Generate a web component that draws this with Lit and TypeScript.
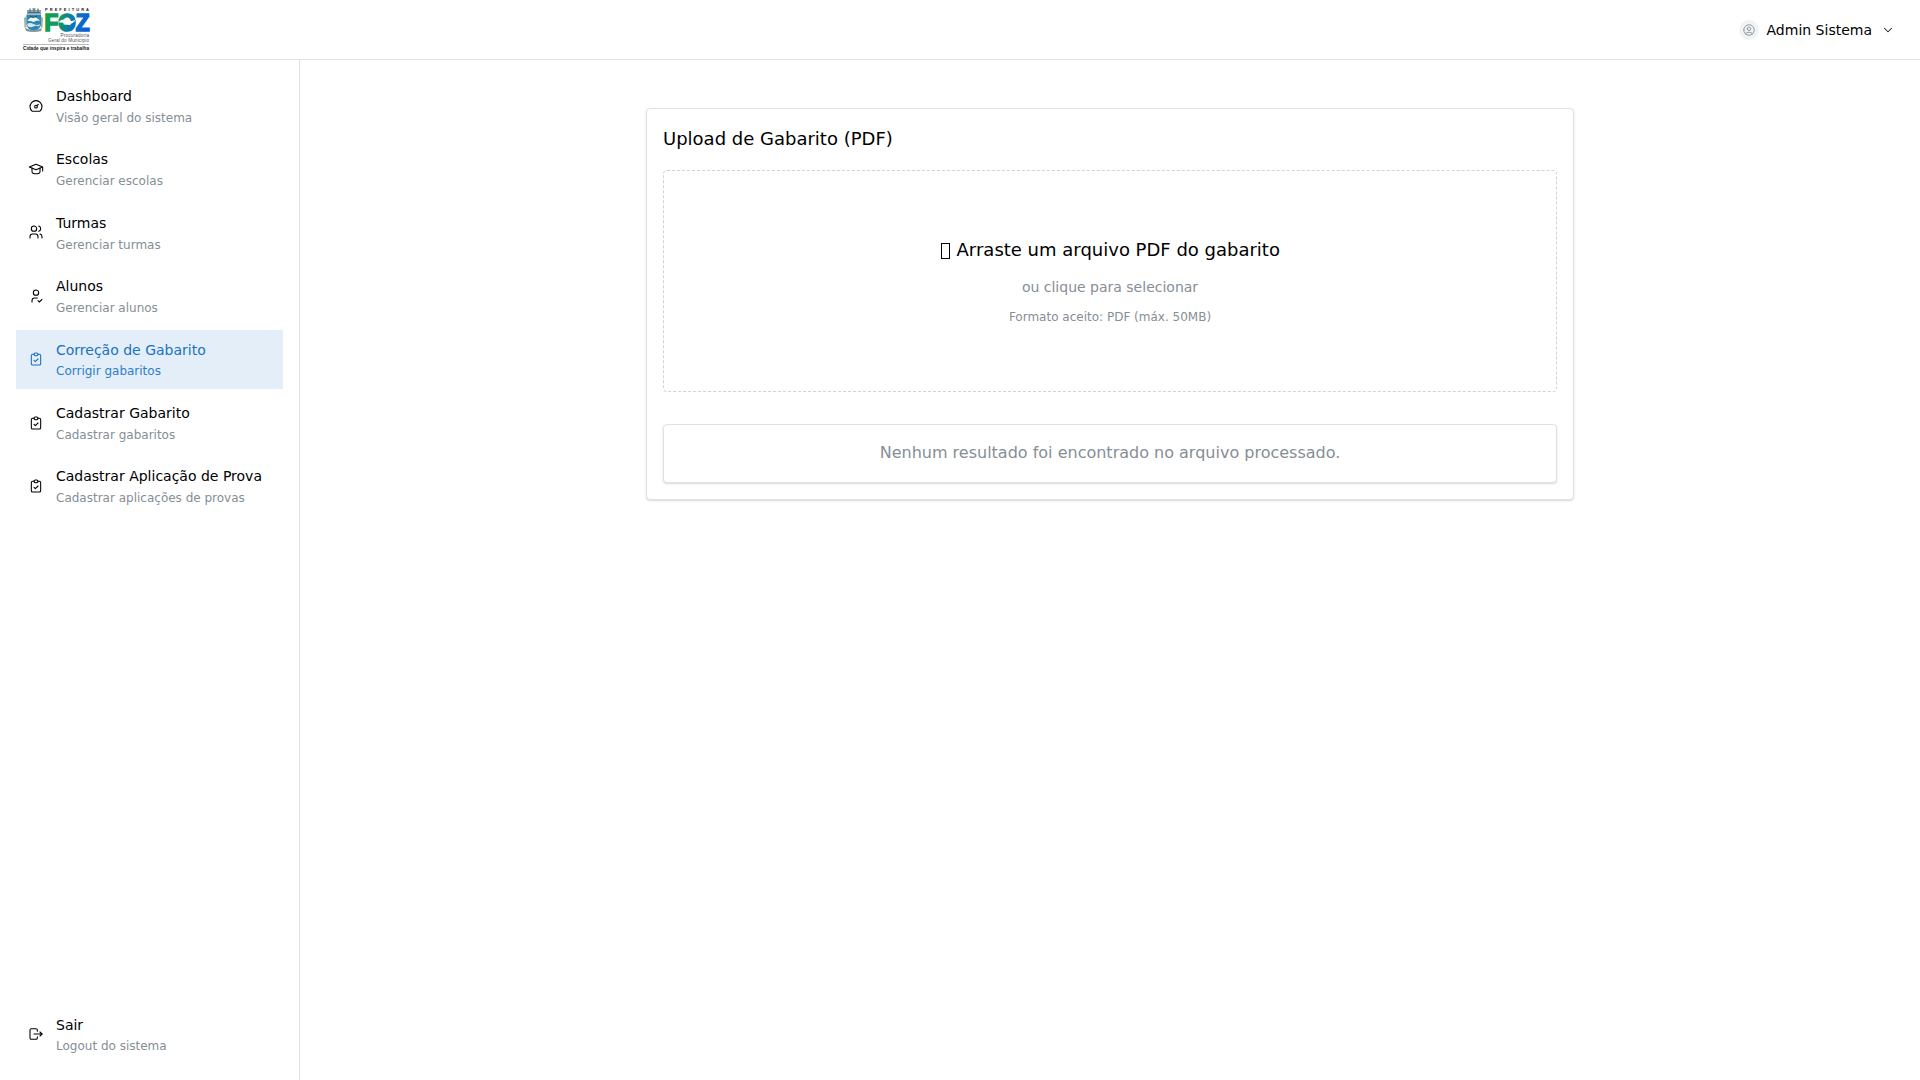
import { LitElement, html, css, svg } from "lit";
import { customElement, property } from "lit/decorators.js";

const ICONS: Record<string, string[]> = {
  dashboard: ["M10 13a2 2 0 1 0 4 0a2 2 0 1 0 -4 0", "M13.45 11.55l2.05 -2.05", "M6.4 20a9 9 0 1 1 11.2 0z"],
  school: ["M22 9l-10 -4l-10 4l10 4l10 -4v6", "M6 10.6v5.4a6 3 0 0 0 12 0v-5.4"],
  users: ["M5 7a4 4 0 1 0 8 0a4 4 0 1 0 -8 0", "M3 21v-2a4 4 0 0 1 4 -4h4a4 4 0 0 1 4 4v2", "M16 3.13a4 4 0 0 1 0 7.75", "M21 21v-2a4 4 0 0 0 -3 -3.85"],
  userCheck: ["M8 7a4 4 0 1 0 8 0a4 4 0 0 0 -8 0", "M6 21v-2a4 4 0 0 1 4 -4h4", "M15 19l2 2l4 -4"],
  clipboard: ["M9 5h-2a2 2 0 0 0 -2 2v12a2 2 0 0 0 2 2h10a2 2 0 0 0 2 -2v-12a2 2 0 0 0 -2 -2h-2", "M9 5a2 2 0 0 1 2 -2h2a2 2 0 0 1 2 2a2 2 0 0 1 -2 2h-2a2 2 0 0 1 -2 -2z", "M9 14l2 2l4 -4"],
  logout: ["M14 8v-2a2 2 0 0 0 -2 -2h-7a2 2 0 0 0 -2 2v12a2 2 0 0 0 2 2h7a2 2 0 0 0 2 -2v-2", "M9 12h12l-3 -3", "M18 15l3 -3"],
  chevron: ["M6 9l6 6l6 -6"],
  userCircle: ["M3 12a9 9 0 1 0 18 0a9 9 0 1 0 -18 0", "M9 10a3 3 0 1 0 6 0a3 3 0 1 0 -6 0", "M6.168 18.849a4 4 0 0 1 3.832 -2.849h4a4 4 0 0 1 3.834 2.855"],
};

const icon = (name: string, size: number, stroke = 1.5) => html`<svg
  width=${size} height=${size} viewBox="0 0 24 24" fill="none" stroke="currentColor"
  stroke-width=${stroke} stroke-linecap="round" stroke-linejoin="round"
>${ICONS[name].map((d) => svg`<path d=${d}></path>`)}</svg>`;

@customElement("nav-link")
class NavLink extends LitElement {
  @property() label = "";
  @property() description = "";
  @property() icon = "";
  @property({ type: Boolean, reflect: true }) active = false;

  static styles = css`
    :host { display: flex; align-items: center; padding: 8px 12px; color: #000; cursor: pointer; line-height: 1.55; }
    :host([active]) { background: #e3eef9; color: #1971c2; }
    svg { display: block; }
    .icon { margin-right: 12px; }
    .body { flex: 1; white-space: nowrap; font-size: 16px; }
    .label { font-size: 14px; }
    .description { display: block; font-size: 12px; color: #868e96; }
    :host([active]) .description { color: #1971c2; opacity: 0.9; }
  `;

  render() {
    return html`<span class="icon">${icon(this.icon, 16, 1.6)}</span>
      <div class="body"><span class="label">${this.label}</span><span class="description">${this.description}</span></div>`;
  }
}

@customElement("city-logo")
class CityLogo extends LitElement {
  static styles = css`
    :host { display: block; }
    svg { display: block; overflow: visible; }
    text { font-family: "Liberation Sans", Arial, sans-serif; }
  `;

  render() {
    return html`<svg width="70" height="48" viewBox="0 0 70 48">
      <defs>
        <linearGradient id="foz" gradientUnits="userSpaceOnUse" x1="23" x2="67" y1="10" y2="22">
          <stop offset="0" stop-color="#12a050"></stop>
          <stop offset="0.35" stop-color="#0c9a62"></stop>
          <stop offset="0.6" stop-color="#0a78b0"></stop>
          <stop offset="1" stop-color="#0b5ce0"></stop>
        </linearGradient>
      </defs>
      <path d="M5 8V4h2V2.500h2V4h1.500V2h3v2h1.500V2.500h2V4H19v4z" fill="#8fa5aa"></path>
      <path d="M6 6.500h12M8 4v3M12 3v4M16 4v3" stroke="#4d666c" stroke-width="0.900"></path>
      <path d="M2 12l2.500-2v11l-2 1zM21 12l-2.500-2v11l2 1z" fill="#9db5a5"></path>
      <path d="M4.500 8.500h14.500v10q-1 5-7.250 6.500Q5.500 23.500 4.500 18.500z" fill="#2d86b5"></path>
      <path d="M5.500 15q2-4 5-3.500 4-1 7.500 3.500l-3-.5-3.500 1.500-3-1z" fill="#eef6f8"></path>
      <path d="M5 18q3-2 6.500 0t6.500 0l-1 2.500q-3-1.500-5.500 0t-5.500 0z" fill="#d5e8ee"></path>
      <path d="M8 10l3 1.500 4-1.500" stroke="#185b46" stroke-width="1" fill="none"></path>
      <path d="M3 22q4 1 8.500 2.500Q17 23 20 22l-1 3q-3 1-7.500 1T4 25z" fill="#7f999c"></path>
      <text x="23" y="5.200" font-size="4" font-weight="700" textLength="44" fill="#222">PREFEITURA</text>
      <text x="22.500" y="24.600" font-size="23" font-weight="700" textLength="45" lengthAdjust="spacingAndGlyphs" fill="url(#foz)" stroke="url(#foz)" stroke-width="1.700">FOZ</text>
      <path d="M36 16.500q5-5 10-2.500t8-1q-3 6-8 4.500t-10-1z" fill="#fff"></path>
      <path d="M40.500 18.500q5 0 8 .5l-1 3h-6z" fill="url(#foz)"></path>
      <text x="38.500" y="31" font-size="4.600" textLength="28.500" fill="#555">Procuradoria</text>
      <text x="26" y="36" font-size="4.600" textLength="41" fill="#555">Geral do Município</text>
      <path d="M1 38.500h66" stroke="#aaa" stroke-width="0.800"></path>
      <text x="1" y="44" font-size="4.600" font-weight="700" textLength="66" fill="#111">Cidade que inspira e trabalha</text>
    </svg>`;
  }
}

@customElement("app-root")
class AppRoot extends LitElement {
  static styles = css`
    :host { display: flex; flex-direction: column; height: 100vh; box-sizing: border-box; background: #fff; color: #000; font-family: "DejaVu Sans", sans-serif; font-size: 16px; line-height: 1.55; }
    * { box-sizing: border-box; }
    svg { display: block; }
    .header { height: 60px; flex: none; display: flex; align-items: center; justify-content: space-between; padding: 0 25px 0 22px; border-bottom: 1px solid #dee2e6; }
    .user { display: flex; align-items: center; gap: 7px; font-size: 14px; line-height: 20px; }
    .avatar { width: 20px; height: 20px; margin-right: 0.5px; border-radius: 50%; background: #f1f3f5; color: #868e96; display: flex; align-items: center; justify-content: center; }
    .chevron { margin-left: 2px; color: #222; }
    .content { flex: 1; display: flex; min-height: 0; }
    .navbar { width: 300px; flex: none; display: flex; flex-direction: column; justify-content: space-between; padding: 16px; border-right: 1px solid #dee2e6; }
    .links { display: flex; flex-direction: column; gap: 4px; }
    .main { flex: 1; padding: 48px 16px 16px; }
    .card { border: 1px solid #dee2e6; border-radius: 4px; padding: 16px; background: #fff; box-shadow: 0 1px 3px rgba(0, 0, 0, 0.05), 0 1px 2px rgba(0, 0, 0, 0.1); }
    .page { width: 928px; margin: 0 auto; }
    .title { font-size: 18px; line-height: 28.8px; }
    .glyph { display: inline-block; width: 9.500px; height: 16px; margin: 0 0.400px 0 0.900px; border: 1px solid #000; vertical-align: -3px; }
    .dropzone { height: 222px; margin: 16px 0 32px; border: 1px dashed #ced4da; border-radius: 4px; display: flex; flex-direction: column; align-items: center; justify-content: center; gap: 12px; }
    .hint { font-size: 14px; line-height: 20.3px; color: #868e96; }
    .format { font-size: 12px; line-height: 16.8px; color: #868e96; }
    .empty { text-align: center; color: #868e96; }
  `;

  private links = [
    ["dashboard", "Dashboard", "Visão geral do sistema"],
    ["school", "Escolas", "Gerenciar escolas"],
    ["users", "Turmas", "Gerenciar turmas"],
    ["userCheck", "Alunos", "Gerenciar alunos"],
    ["clipboard", "Correção de Gabarito", "Corrigir gabaritos"],
    ["clipboard", "Cadastrar Gabarito", "Cadastrar gabaritos"],
    ["clipboard", "Cadastrar Aplicação de Prova", "Cadastrar aplicações de provas"],
  ];

  render() {
    return html`
      <header class="header">
        <city-logo></city-logo>
        <div class="user">
          <span class="avatar">${icon("userCircle", 14)}</span>
          <span>Admin Sistema</span>
          <span class="chevron">${icon("chevron", 14, 1.8)}</span>
        </div>
      </header>
      <div class="content">
        <nav class="navbar">
          <div class="links">
            ${this.links.map(([i, l, d], n) => html`<nav-link icon=${i} label=${l} description=${d} ?active=${n === 4}></nav-link>`)}
          </div>
          <nav-link icon="logout" label="Sair" description="Logout do sistema"></nav-link>
        </nav>
        <main class="main">
          <section class="card page">
            <div class="title">Upload de Gabarito (PDF)</div>
            <div class="dropzone">
              <div class="title"><span class="glyph"></span> Arraste um arquivo PDF do gabarito</div>
              <div class="hint">ou clique para selecionar</div>
              <div class="format">Formato aceito: PDF (máx. 50MB)</div>
            </div>
            <div class="card empty">Nenhum resultado foi encontrado no arquivo processado.</div>
          </section>
        </main>
      </div>`;
  }
}
